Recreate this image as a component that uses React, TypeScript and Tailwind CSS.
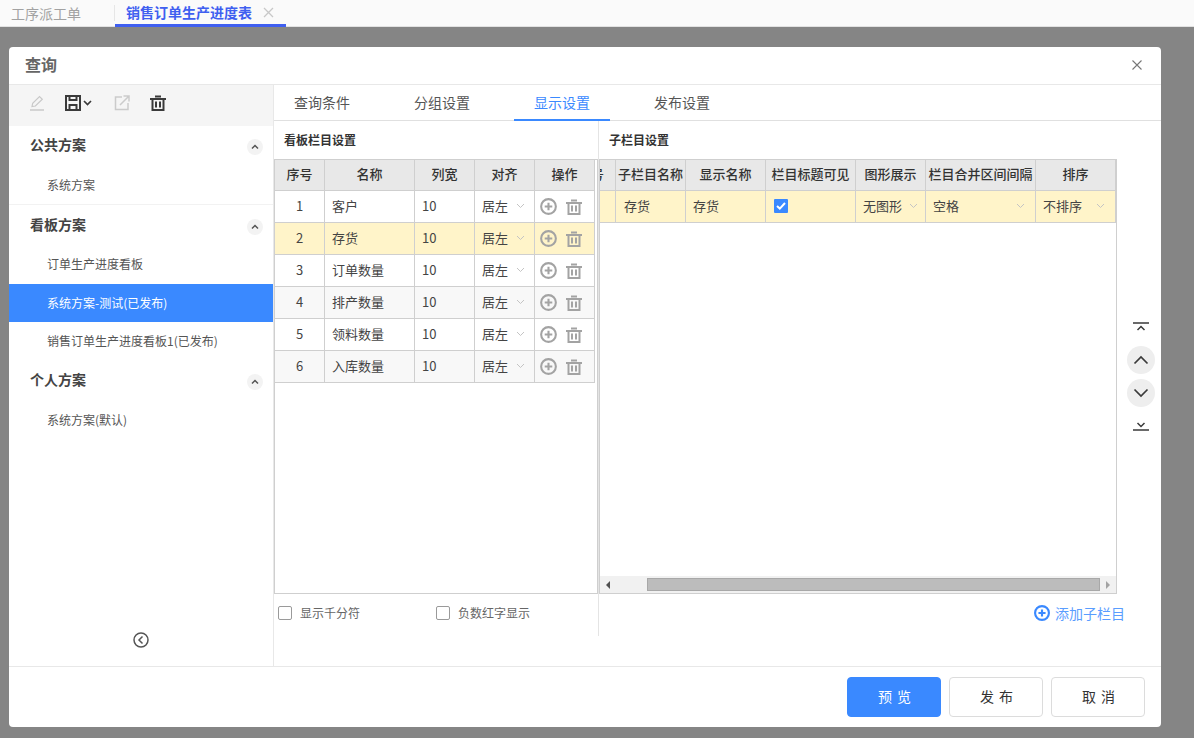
const font = "font-['Noto_Sans_CJK_SC','Liberation_Sans',sans-serif]";

const leftRows = [
  { no: 1, name: "客户" },
  { no: 2, name: "存货", active: true },
  { no: 3, name: "订单数量" },
  { no: 4, name: "排产数量", alt: true },
  { no: 5, name: "领料数量" },
  { no: 6, name: "入库数量", alt: true },
];

function Chevron({ className = "text-[#c4c4c4]" }: { className?: string }) {
  return (
    <svg width="9" height="6" viewBox="0 0 9 6" fill="none" stroke="currentColor" strokeWidth="1" className={className}>
      <path d="M1 1l3.5 3.5L8 1" />
    </svg>
  );
}

function TrashIcon({ size = 16, color = "#a3a3a3" }: { size?: number; color?: string }) {
  return (
    <svg width={size} height={size} viewBox="0 0 16 16" fill="none" stroke={color} strokeWidth="2">
      <path d="M5 1.500h6M0 4h16" />
      <path d="M2.500 4v11h11V4" />
      <path d="M6 6.500v6M10 6.500v6" />
    </svg>
  );
}

function PlusCircle({ size = 17, color = "#a3a3a3", stroke = 2.2 }: { size?: number; color?: string; stroke?: number }) {
  return (
    <svg width={size} height={size} viewBox="0 0 18 18" fill="none" stroke={color} strokeWidth={stroke}>
      <circle cx="9" cy="9" r="7.800" />
      <path d="M9 5v8M5 9h8" />
    </svg>
  );
}

function SectionHead({ title, height }: { title: string; height: string }) {
  return (
    <div className={`flex items-center justify-between pl-[21px] pr-[10px] ${height}`}>
      <span className="text-[14px] font-bold text-[#444]">{title}</span>
      <span className="mt-[6px] w-4 h-4 rounded-full bg-[#f3f3f3] flex items-center justify-center">
        <svg width="8" height="6" viewBox="0 0 8 6" fill="none" stroke="#555" strokeWidth="1.500">
          <path d="M1 4.500l3-3 3 3" />
        </svg>
      </span>
    </div>
  );
}

function SideItem({ label, active, className = "" }: { label: string; active?: boolean; className?: string }) {
  return (
    <div className={`h-[38px] pl-[38px] flex items-center text-[12px] ${active ? "bg-[#3a89ff] text-white" : "text-[#555]"} ${className}`}>
      {label}
    </div>
  );
}

function Th({ w, children }: { w: string; children?: React.ReactNode }) {
  return (
    <div className={`${w} shrink-0 h-full pb-[2px] flex items-center justify-center text-[13px] font-medium text-[#333] border-r border-[#cfcfcf]`}>
      {children}
    </div>
  );
}

function Td({ w, children, center, pl = "pl-[7px]" }: { w: string; children?: React.ReactNode; center?: boolean; pl?: string }) {
  return (
    <div className={`${w} shrink-0 h-full pb-[2px] flex items-center text-[13px] text-[#444] ${center ? "justify-center" : pl} border-r border-[#cfcfcf]`}>
      {children}
    </div>
  );
}

function LeftTable() {
  return (
    <div className="w-[324px] h-[435px] border border-[#cfcfcf] bg-white">
      <div className="flex w-[320px] h-[31px] bg-[#e8e8e8] border-b border-[#cfcfcf]">
        <Th w="w-[50px]">序号</Th>
        <Th w="w-[90px]">名称</Th>
        <Th w="w-[60px]">列宽</Th>
        <Th w="w-[60px]">对齐</Th>
        <Th w="w-[60px]">操作</Th>
      </div>
      {leftRows.map((r) => (
        <div
          key={r.no}
          className={`flex w-[320px] h-[32px] border-b border-[#cfcfcf] ${r.active ? "bg-[#fff4c9]" : r.alt ? "bg-[#f8f8f8]" : "bg-white"}`}
        >
          <Td w="w-[50px]" center>{r.no}</Td>
          <Td w="w-[90px]">{r.name}</Td>
          <Td w="w-[60px]">10</Td>
          <Td w="w-[60px]">
            <span className="mr-[8px]">居左</span>
            <Chevron />
          </Td>
          <div className="w-[60px] shrink-0 h-full flex items-center gap-[9px] pl-[5px] border-r border-[#cfcfcf]">
            <PlusCircle />
            <TrashIcon />
          </div>
        </div>
      ))}
    </div>
  );
}

function RightTable() {
  return (
    <div className="w-[518px] h-[435px] border border-[#cfcfcf] bg-white flex flex-col">
      <div className="flex h-[31px] bg-[#e8e8e8] border-b border-[#cfcfcf] overflow-hidden">
        <div className="w-[16px] shrink-0 h-full pb-[2px] flex items-center overflow-hidden border-r border-[#cfcfcf] text-[13px] font-medium text-[#333]">
          <span className="shrink-0 whitespace-nowrap -ml-[22px]">序号</span>
        </div>
        <Th w="w-[70px]">子栏目名称</Th>
        <Th w="w-[80px]">显示名称</Th>
        <Th w="w-[90px]">栏目标题可见</Th>
        <Th w="w-[70px]">图形展示</Th>
        <Th w="w-[110px]">栏目合并区间间隔</Th>
        <Th w="w-[80px]">排序</Th>
      </div>
      <div className="flex h-[32px] bg-[#fff4c9] border-b border-[#cfcfcf]">
        <Td w="w-[16px]" />
        <Td w="w-[70px]" pl="pl-[8px]">存货</Td>
        <Td w="w-[80px]">存货</Td>
        <Td w="w-[90px]" pl="pl-[8px]">
          <span className="w-[14px] h-[14px] bg-[#3a89ff] flex items-center justify-center rounded-[1px]">
            <svg width="10" height="8" viewBox="0 0 10 8" fill="none" stroke="#fff" strokeWidth="2">
              <path d="M1 4l2.800 2.600L9 1" />
            </svg>
          </span>
        </Td>
        <div className="w-[70px] shrink-0 h-full pb-[2px] flex items-center pl-[7px] gap-[7px] border-r border-[#cfcfcf] text-[13px] text-[#444]">
          无图形
          <Chevron />
        </div>
        <div className="w-[110px] shrink-0 h-full pb-[2px] flex items-center justify-between pl-[7px] pr-[10px] border-r border-[#cfcfcf] text-[13px] text-[#444]">
          空格
          <Chevron />
        </div>
        <div className="w-[80px] shrink-0 h-full pb-[2px] flex items-center justify-between pl-[7px] pr-[10px] text-[13px] text-[#444] border-r border-[#cfcfcf]">
          不排序
          <Chevron />
        </div>
      </div>
      <div className="flex-1" />
      <div className="h-[17px] bg-[#f1f1f1] flex items-center">
        <div className="w-[47px] shrink-0 pl-[6px]">
          <div className="w-0 h-0 border-y-[4px] border-y-transparent border-r-[4px] border-r-[#505050]" />
        </div>
        <div className="w-[453px] h-[13px] bg-[#bcbcbc] border border-[#a8a8a8]" />
        <div className="pl-[6px]">
          <div className="w-0 h-0 border-y-[4px] border-y-transparent border-l-[4px] border-l-[#a3a3a3]" />
        </div>
      </div>
    </div>
  );
}

function Check({ label, className = "" }: { label: string; className?: string }) {
  return (
    <label className={`flex items-center gap-[8px] text-[12px] text-[#666] ${className}`}>
      <span className="w-[14px] h-[14px] rounded-[2px] border border-[#9a9a9a] bg-white" />
      {label}
    </label>
  );
}

function OrderButton({ children, circle }: { children: React.ReactNode; circle?: boolean }) {
  return (
    <div className={`w-[28px] h-[28px] flex items-center justify-center rounded-full ${circle ? "bg-[#eeeeee]" : ""}`}>
      {children}
    </div>
  );
}

function Button({ children, primary }: { children: React.ReactNode; primary?: boolean }) {
  return (
    <button
      className={`w-[94px] h-[40px] pl-[6px] pb-[2px] rounded-[4px] text-[14px] tracking-[5px] border ${
        primary ? "bg-[#3a89ff] border-[#3a89ff] text-white" : "bg-white border-[#dcdcdc] text-[#333]"
      }`}
    >
      {children}
    </button>
  );
}

export default function App() {
  return (
    <div className={`${font} w-[1194px] h-[738px] overflow-hidden bg-[#858585]`}>
      <div className="h-[27px] bg-[#fafafa] border-b border-[#e2e2e2] flex items-stretch">
        <div className="w-[114px] pl-[11px] flex items-center text-[14px] text-[#a2a2a2]">工序派工单</div>
        <div className="w-px h-[16px] self-center bg-[#e6e6e6]" />
        <div className="w-[171px] pl-[11px] flex items-center gap-[11px] border-b-[3px] border-[#3f5ff0] -mb-[1px] text-[14px] font-bold text-[#3f5ff0]">
          销售订单生产进度表
          <svg width="11" height="11" viewBox="0 0 11 11" stroke="#c8c8c8" strokeWidth="1.300">
            <path d="M1 1l9 9M10 1l-9 9" />
          </svg>
        </div>
      </div>

      <div className="ml-[9px] mt-[20px] w-[1152px] h-[680px] bg-white rounded-[4px] flex flex-col overflow-hidden">
        <div className="h-[38px] shrink-0 pb-[2px] pl-[16px] pr-[19px] flex items-center justify-between border-b border-[#e8e8e8]">
          <span className="text-[16px] font-bold text-[#666] mb-[2px]">查询</span>
          <svg width="10" height="10" viewBox="0 0 10 10" stroke="#777" strokeWidth="1.100">
            <path d="M.5.5l9 9M9.500.5l-9 9" />
          </svg>
        </div>

        <div className="flex flex-1 min-h-0">
          <aside className="w-[265px] shrink-0 border-r border-[#e8e8e8] flex flex-col">
            <div className="h-[41px] pb-[5px] bg-[#f5f5f5] flex items-center pl-[20px] text-[#333]">
              <svg width="16" height="16" viewBox="0 0 16 16" fill="none" stroke="#c9c9c9" strokeWidth="1.200">
                <path d="M3 11.500l.7-3.300L10.500 1.500l2.800 2.800-6.900 6.700z" />
                <path d="M1 15h14" strokeWidth="1.500" />
              </svg>
              <svg className="ml-[20px]" width="16" height="16" viewBox="0 0 16 16" fill="none" stroke="#3a3a3a" strokeWidth="2">
                <path d="M1 1h14v14H1z" />
                <path d="M4.500 1v4h7V1" />
                <path d="M4.500 15v-5h7v5" />
              </svg>
              <svg className="ml-[2px]" width="9" height="6" viewBox="0 0 9 6" fill="none" stroke="#3a3a3a" strokeWidth="1.700">
                <path d="M1 1l3.500 3.500L8 1" />
              </svg>
              <svg className="ml-[22px]" width="16" height="16" viewBox="0 0 16 16" fill="none" stroke="#cbcbcb" strokeWidth="1.500">
                <path d="M8 2H1.500v12.500H14V8" />
                <path d="M6 10l8.500-8.500M9.500 1H15v5.500" />
              </svg>
              <span className="ml-[20px]">
                <TrashIcon color="#3a3a3a" />
              </span>
            </div>

            <div className="flex-1 flex flex-col">
              <SectionHead title="公共方案" height="h-[36px]" />
              <div className="pt-[4px] border-b border-[#f2f2f2]">
                <SideItem label="系统方案" />
              </div>
              <SectionHead title="看板方案" height="h-[38px]" />
              <SideItem label="订单生产进度看板" className="mt-[2px] mb-[1px]" />
              <SideItem label="系统方案-测试(已发布)" active />
              <SideItem label="销售订单生产进度看板1(已发布)" />
              <SectionHead title="个人方案" height="h-[38px]" />
              <SideItem label="系统方案(默认)" className="mt-[3px]" />
              <div className="flex-1 flex items-end justify-center pb-[18px]">
                <svg width="16" height="16" viewBox="0 0 16 16" fill="none" stroke="#555" strokeWidth="1.500">
                  <circle cx="8" cy="8" r="7" />
                  <path d="M9.500 4.500L6 8l3.500 3.500" />
                </svg>
              </div>
            </div>
          </aside>

          <main className="flex-1 min-w-0 flex flex-col">
            <div className="h-[36px] shrink-0 flex border-b border-[#e0e0e0] text-[14px] text-[#555]">
              <div className="w-[120px] pl-[20px] flex items-center">查询条件</div>
              <div className="w-[120px] pl-[20px] flex items-center">分组设置</div>
              <div className="w-[96px] flex items-center justify-center text-[#3a89ff] border-b-2 border-[#3a89ff] h-[36px]">显示设置</div>
              <div className="ml-[44px] flex items-center">发布设置</div>
            </div>

            <div className="flex flex-1 min-h-0">
              <section className="w-[324px] shrink-0">
                <div className="h-[37px] mb-[1px] pl-[10px] flex items-center text-[12px] font-bold text-[#333]">看板栏目设置</div>
                <LeftTable />
                <div className="flex items-center h-[38px] pl-[4px]">
                  <Check label="显示千分符" className="w-[158px]" />
                  <Check label="负数红字显示" />
                </div>
              </section>

              <section className="shrink-0 w-[519px] border-l border-[#e4e4e4] h-[515px]">
                <div className="h-[37px] mb-[1px] pl-[10px] flex items-center text-[12px] font-bold text-[#333]">子栏目设置</div>
                <RightTable />
                <div className="flex items-center justify-end gap-[5px] h-[38px] -mr-[8px] text-[14px] text-[#5a9dff]">
                  <PlusCircle size={16} color="#3a89ff" stroke={2.400} />
                  添加子栏目
                </div>
              </section>

              <div className="flex-1 flex flex-col items-center pt-[192px] pl-[4px] gap-[5px]">
                <OrderButton>
                  <svg width="16" height="10" viewBox="0 0 16 10" fill="none" stroke="#3a3a3a" strokeWidth="1.500">
                    <path d="M0 1h16M4.500 8L8 4.500 11.500 8" />
                  </svg>
                </OrderButton>
                <OrderButton circle>
                  <svg width="16" height="10" viewBox="0 0 16 10" fill="none" stroke="#3a3a3a" strokeWidth="1.700">
                    <path d="M1.500 8.500L8 2l6.500 6.500" />
                  </svg>
                </OrderButton>
                <OrderButton circle>
                  <svg width="16" height="10" viewBox="0 0 16 10" fill="none" stroke="#3a3a3a" strokeWidth="1.700">
                    <path d="M1.500 1.500L8 8l6.500-6.500" />
                  </svg>
                </OrderButton>
                <OrderButton>
                  <svg width="16" height="10" viewBox="0 0 16 10" fill="none" stroke="#3a3a3a" strokeWidth="1.500">
                    <path d="M0 9h16M4.500 2L8 5.500 11.500 2" />
                  </svg>
                </OrderButton>
              </div>
            </div>
          </main>
        </div>

        <div className="h-[61px] shrink-0 border-t border-[#e8e8e8] flex items-center justify-end gap-[8px] pr-[16px]">
          <Button primary>预览</Button>
          <Button>发布</Button>
          <Button>取消</Button>
        </div>
      </div>
    </div>
  );
}
